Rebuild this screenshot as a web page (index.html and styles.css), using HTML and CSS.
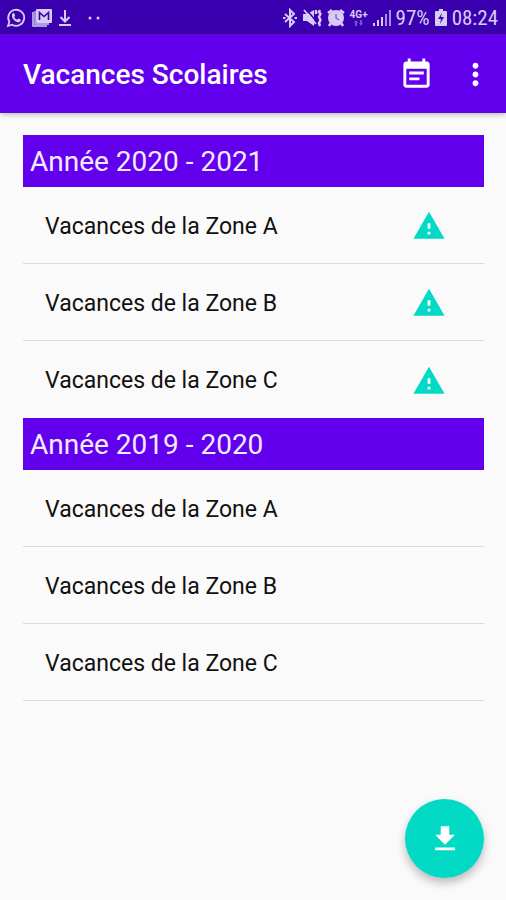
FILE: index.html
```
<!DOCTYPE html>
<html lang="fr">
<head>
    <meta charset="UTF-8">
    <meta name="viewport" content="width=device-width, initial-scale=1.0">
    <title>Vacances Scolaires</title>
    <link rel="stylesheet" href="styles.css">
</head>
<body>
    <div class="status-bar">
        <div class="status-left">
            <svg width="20" height="20" viewBox="0 0 20 20" fill="none" stroke="currentColor">
                <path d="M2 18l1.300-4.200A8 8 0 1 1 6.200 16.700z" stroke-width="1.800"/>
                <path d="M6.500 5.500l1.500-.5 1.200 2.700-1 1.200c.7 1.300 1.600 2.200 3 2.900l1.100-1.200 2.600 1.200c-.1 1.800-1.300 2.500-2.700 2.400C9 13.800 5.800 10.500 6 7.200c0-.7.200-1.300.5-1.700z" fill="currentColor" stroke="none"/>
            </svg>
            <svg width="20" height="20" viewBox="0 0 20 20">
                <path d="M1 4v14h14" fill="none" stroke="currentColor" stroke-width="1.500"/>
                <path d="M3 3v13h14" fill="none" stroke="currentColor" stroke-width="1.300"/>
                <rect x="4" y="1" width="16" height="14" rx="1" fill="currentColor"/>
                <path d="M7.500 12V4.500l4.500 4 4.500-4V12" fill="none" stroke="#3a00b0" stroke-width="1.600"/>
            </svg>
            <svg width="14" height="20" viewBox="0 0 14 20" fill="none" stroke="currentColor" stroke-width="2">
                <path d="M7 2v11M2.500 9L7 13.500 11.500 9M1 17h12"/>
            </svg>
            <svg class="more-dots" width="12" height="20" viewBox="0 0 12 20" fill="currentColor">
                <circle cx="2" cy="10" r="1.500"/>
                <circle cx="10" cy="10" r="1.500"/>
            </svg>
        </div>
        <div class="status-right">
            <svg width="14" height="20" viewBox="0 0 14 20" fill="none" stroke="currentColor" stroke-width="2">
                <path d="M2 6l9 8-4 4V2l4 4-9 8"/>
                <path d="M0 10h2.500M11.500 10H14"/>
            </svg>
            <svg width="20" height="20" viewBox="0 0 20 20" fill="none" stroke="currentColor">
                <path d="M1 6h4l7-4v16l-7-5H1z" fill="currentColor" stroke="none"/>
                <path d="M4 1l10 12" stroke="#3a00b0" stroke-width="1.500"/>
                <path d="M2 2l12 14" stroke-width="1.800"/>
                <path d="M14 2v4M18 2l-1 2 1.500 2-1.500 3 1.500 3-1.500 3 1 3" stroke-width="2.400"/>
            </svg>
            <svg width="18" height="20" viewBox="0 0 18 20" fill="none" stroke="currentColor">
                <circle cx="9" cy="10" r="8" fill="currentColor" stroke="none"/>
                <path d="M1 5l4-3M17 5l-4-3M3.500 15.500L2 18M14.500 15.500L16 18" stroke-width="2.500"/>
                <path d="M9 6v4l3 2" stroke="#7a55cc" stroke-width="1.300"/>
            </svg>
            <span class="network">
                <span>4G+</span>
                <svg width="9" height="6" viewBox="0 0 9 6" fill="currentColor" opacity="0.4">
                    <path d="M0 3l2-3 2 3H3v3H1V3zM5 3h1V0h2v3h1L7 6z"/>
                </svg>
            </span>
            <svg width="18" height="20" viewBox="0 0 18 20" fill="currentColor">
                <path d="M0 15h2v3H0zM4 12h2v6H4zM8 9h2v9H8z"/>
                <path d="M12 6h2v12h-2zM16 2h2v16h-2z" opacity="0.7"/>
            </svg>
            <span class="battery-level">97%</span>
            <svg width="12" height="20" viewBox="0 0 12 20">
                <path d="M4 1h4v2h3q1 0 1 1v13q0 1-1 1H1q-1 0-1-1V4q0-1 1-1h3z" fill="currentColor"/>
                <path d="M7 5l-4 6h3l-1 5 4-7H6z" fill="#3a00b0"/>
            </svg>
            <time>08:24</time>
        </div>
    </div>

    <header class="app-bar">
        <h1>Vacances Scolaires</h1>
        <button type="button" class="icon-button" aria-label="Calendrier">
            <svg width="35" height="35" viewBox="0 0 24 24" fill="currentColor">
                <path d="M17 10H7v2h10v-2zm2-7h-1V1h-2v2H8V1H6v2H5c-1.110 0-1.990.9-1.990 2L3 19c0 1.100.89 2 2 2h14c1.100 0 2-.9 2-2V5c0-1.100-.9-2-2-2zm0 16H5V8h14v11zm-5-5H7v2h7v-2z"/>
            </svg>
        </button>
        <button type="button" class="icon-button menu-button" aria-label="Plus d'options">
            <svg width="35" height="35" viewBox="0 0 24 24" fill="currentColor">
                <path d="M12 8c1.100 0 2-.9 2-2s-.9-2-2-2-2 .9-2 2 .9 2 2 2zm0 2c-1.100 0-2 .9-2 2s.9 2 2 2 2-.9 2-2-.9-2-2-2zm0 6c-1.100 0-2 .9-2 2s.9 2 2 2 2-.9 2-2-.9-2-2-2z"/>
            </svg>
        </button>
    </header>

    <main>
        <section>
            <h2>Année 2020 - 2021</h2>
            <ul>
                <li>
                    <span>Vacances de la Zone A</span>
                    <svg class="warning" viewBox="0 0 24 24"><path d="M1 21h22L12 2 1 21zm12-3h-2v-2h2v2zm0-4h-2v-4h2v4z"/></svg>
                </li>
                <li>
                    <span>Vacances de la Zone B</span>
                    <svg class="warning" viewBox="0 0 24 24"><path d="M1 21h22L12 2 1 21zm12-3h-2v-2h2v2zm0-4h-2v-4h2v4z"/></svg>
                </li>
                <li>
                    <span>Vacances de la Zone C</span>
                    <svg class="warning" viewBox="0 0 24 24"><path d="M1 21h22L12 2 1 21zm12-3h-2v-2h2v2zm0-4h-2v-4h2v4z"/></svg>
                </li>
            </ul>
        </section>
        <section>
            <h2>Année 2019 - 2020</h2>
            <ul>
                <li><span>Vacances de la Zone A</span></li>
                <li><span>Vacances de la Zone B</span></li>
                <li><span>Vacances de la Zone C</span></li>
            </ul>
        </section>
    </main>

    <button type="button" class="fab" aria-label="Télécharger">
        <svg width="34" height="34" viewBox="0 0 24 24" fill="currentColor">
            <path d="M19 9h-4V3H9v6H5l7 7 7-7zM5 18v2h14v-2H5z"/>
        </svg>
    </button>
</body>
</html>
```
FILE: styles.css
```
* {
    box-sizing: border-box;
}
body {
    margin: 0;
    min-height: 100vh;
    background-color: #fafafa;
    color: #111;
    font-family: Roboto, sans-serif;
}
svg {
    display: block;
    flex-shrink: 0;
}
button {
    padding: 0;
    border: none;
    color: white;
    cursor: pointer;
}

/* Status bar */
.status-bar {
    display: flex;
    justify-content: space-between;
    align-items: center;
    height: 34px;
    padding: 2px 8px 0 6px;
    background-color: #3a00b0;
    color: #d8ccf5;
    font-size: 21px;
}
.status-left,
.status-right {
    display: flex;
    align-items: center;
}
.status-left {
    gap: 6px;
}
.more-dots {
    margin-left: 10px;
}
.status-right {
    gap: 5px;
}
.network {
    display: flex;
    flex-direction: column;
    align-items: center;
    font-size: 10px;
    line-height: 10px;
    font-weight: bold;
}
.battery-level,
time {
    font-family: "Roboto Condensed", Roboto, sans-serif;
}

/* App bar */
.app-bar {
    display: flex;
    align-items: center;
    height: 79px;
    padding: 1px 13px 0 23px;
    background-color: #6200ee;
    color: white;
    box-shadow: 0 1px 6px rgba(0,0,0,0.3);
}
h1 {
    flex: 1;
    margin: 0;
    font-size: 28px;
    font-weight: 500;
}
.icon-button {
    background: none;
}
.menu-button {
    margin-left: 24px;
}

/* School years */
main {
    padding: 22px 22px 0 23px;
}
h2 {
    margin: 0;
    padding: 2px 7px 0;
    background-color: #6200ee;
    color: #f3ebff;
    font-size: 28px;
    font-weight: normal;
    line-height: 50px;
}
ul {
    margin: 0;
    padding: 0;
    list-style: none;
}
li {
    display: flex;
    align-items: center;
    justify-content: space-between;
    height: 77px;
    padding: 2px 38px 0 22px;
    border-bottom: 1px solid #dadada;
    font-size: 23px;
}
section:first-child li:last-child {
    border-bottom: none;
}
.warning {
    width: 34px;
    height: 34px;
    fill: #03dac5;
}

/* Floating download button */
.fab {
    position: fixed;
    right: 22px;
    bottom: 22px;
    display: flex;
    align-items: center;
    justify-content: center;
    width: 79px;
    height: 79px;
    border-radius: 50%;
    background-color: #03dac5;
    box-shadow: 0 5px 10px rgba(0,0,0,0.25);
}
```
